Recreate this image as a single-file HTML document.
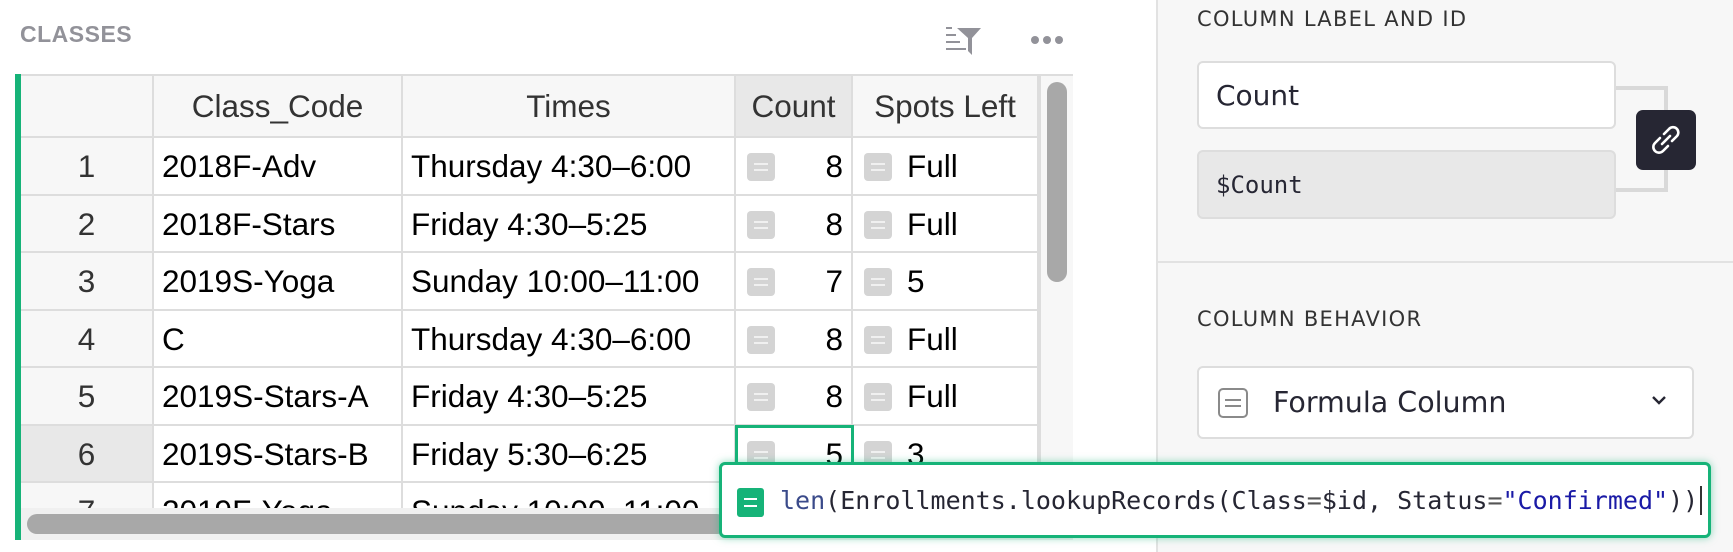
<!DOCTYPE html>
<html><head><meta charset="utf-8"><style>
*{box-sizing:border-box;margin:0;padding:0}
body{width:1733px;height:552px;overflow:hidden;background:#fff;font-family:"Liberation Sans",sans-serif;position:relative;color:#000}
.a{position:absolute}
.t{font-size:31.5px;line-height:57px;white-space:nowrap;overflow:hidden}
.mono{font-family:"DejaVu Sans Mono","Liberation Mono",monospace}
.eq{position:absolute;width:28px;height:28px;background:#d4d4d4;border-radius:4px}
.eq:before,.eq:after{content:"";position:absolute;left:7px;width:14px;height:2px;background:#f0f0f0}
.eq:before{top:10px}.eq:after{top:16px}
</style></head><body>
<div class="a" style="left:20px;top:21px;font-size:23px;font-weight:bold;color:#929299;letter-spacing:0.5px">CLASSES</div>
<svg class="a" style="left:944px;top:24px" width="38" height="32" viewBox="0 0 38 32">
<rect x="2" y="3" width="6" height="2" fill="#929299"/><rect x="2" y="10" width="10" height="2" fill="#929299"/><rect x="2" y="17" width="14" height="2" fill="#929299"/><rect x="2" y="24" width="20" height="2" fill="#929299"/>
<path d="M13 4 H37 L28 14 V31 L24 27 V14 Z" fill="#929299"/></svg>
<div class="a" style="left:1031px;top:36px;width:8px;height:8px;border-radius:4px;background:#929299"></div>
<div class="a" style="left:1043px;top:36px;width:8px;height:8px;border-radius:4px;background:#929299"></div>
<div class="a" style="left:1055px;top:36px;width:8px;height:8px;border-radius:4px;background:#929299"></div>

<div class="a" style="left:15px;top:74px;width:6px;height:466px;background:#16b378"></div>
<div id="tbl" class="a" style="left:21px;top:74px;width:1052px;height:466px;border-top:2px solid #ddd;overflow:hidden">
</div>
<script>
var cols=[0,133,382,715,832,1018];
var rows=[["1","2018F-Adv","Thursday 4:30–6:00","8","Full"],["2","2018F-Stars","Friday 4:30–5:25","8","Full"],["3","2019S-Yoga","Sunday 10:00–11:00","7","5"],["4","C","Thursday 4:30–6:00","8","Full"],["5","2019S-Stars-A","Friday 4:30–5:25","8","Full"],["6","2019S-Stars-B","Friday 5:30–6:25","5","3"],["7","2019F-Yoga","Sunday 10:00–11:00","8","Full"]];
var h='';
var hd=["","Class_Code","Times","Count","Spots Left"];
for(var c=0;c<5;c++){var bg=c==3?'#e8e8e8':'#f7f7f7';h+='<div class="a t" style="left:'+cols[c]+'px;top:0;width:'+(cols[c+1]-cols[c])+'px;height:62px;line-height:60px;background:'+bg+';border-right:2px solid #ddd;border-bottom:2px solid #ddd;text-align:center;color:#333">'+hd[c]+'</div>';}
for(var r=0;r<7;r++){var y=62+r*57.5;
h+='<div class="a t" style="left:0;top:'+y+'px;width:133px;height:57.5px;background:'+(r==5?'#e8e8e8':'#f7f7f7')+';border-right:2px solid #ddd;border-bottom:2px solid #ddd;text-align:center;color:#333">'+rows[r][0]+'</div>';
h+='<div class="a t" style="left:133px;top:'+y+'px;width:249px;height:57.5px;border-right:2px solid #ddd;border-bottom:2px solid #ddd;padding-left:8px">'+rows[r][1]+'</div>';
h+='<div class="a t" style="left:382px;top:'+y+'px;width:333px;height:57.5px;border-right:2px solid #ddd;border-bottom:2px solid #ddd;padding-left:8px">'+rows[r][2]+'</div>';
h+='<div class="a t" style="left:715px;top:'+y+'px;width:117px;height:57.5px;border-right:2px solid #ddd;border-bottom:2px solid #ddd;text-align:right;padding-right:8px">'+rows[r][3]+'<div class="eq" style="left:11px;top:15px"></div></div>';
h+='<div class="a t" style="left:832px;top:'+y+'px;width:186px;height:57.5px;border-right:2px solid #ddd;border-bottom:2px solid #ddd;padding-left:54px">'+rows[r][4]+'<div class="eq" style="left:11px;top:15px"></div></div>';}
h+='<div class="a" style="left:714px;top:'+(62+5*57.5-1)+'px;width:119px;height:59px;border:3px solid #16b378"></div>';
h+='<div class="a" style="left:1018px;top:0;width:34px;height:466px;background:#f7f7f7;border-left:2px solid #ddd"></div>';
h+='<div class="a" style="left:1026px;top:6px;width:20px;height:200px;border-radius:10px;background:#a8a8a8"></div>';
h+='<div class="a" style="left:0;top:432px;width:1052px;height:34px;background:#f0f0f0"></div>';
h+='<div class="a" style="left:6px;top:438px;width:700px;height:20px;border-radius:10px;background:#a8a8a8"></div>';
document.getElementById('tbl').innerHTML=h;
</script>

<div class="a" style="left:1156px;top:0;width:577px;height:552px;background:#f7f7f7;border-left:2px solid #e2e2e2"></div>
<div class="a" style="left:1197px;top:7px;font-size:21px;color:#333;font-family:'DejaVu Sans','Liberation Sans',sans-serif;letter-spacing:1.3px">COLUMN LABEL AND ID</div>
<div class="a" style="left:1616px;top:86px;width:52px;height:106px;border:4px solid #d9d9d9;border-left:none"></div>
<div class="a" style="left:1197px;top:61px;width:419px;height:68px;background:#fff;border:2px solid #ddd;border-radius:6px;font-family:'DejaVu Sans',sans-serif;font-size:28px;line-height:66px;padding-left:17px;color:#262633">Count</div>
<div class="a" style="left:1197px;top:150px;width:419px;height:69px;background:#e8e8e8;border:2px solid #ddd;border-radius:6px;font-size:24px;line-height:67px;padding-left:17px;color:#262633" ><span class="mono">$Count</span></div>
<div class="a" style="left:1636px;top:110px;width:60px;height:60px;background:#262633;border-radius:7px"></div>
<svg class="a" style="left:1650px;top:124px" width="32" height="32" viewBox="0 0 32 32" fill="none" stroke="#fff" stroke-width="2.6" stroke-linecap="round">
<path d="M14 10 L19 5 A4.6 4.6 0 0 1 27 12 L22 17"/><path d="M18 22 L13 27 A4.6 4.6 0 0 1 5 19 L10 14"/><path d="M12 20 L20 12"/></svg>
<div class="a" style="left:1158px;top:261px;width:575px;height:2px;background:#e2e2e2"></div>
<div class="a" style="left:1197px;top:307px;font-size:21px;color:#333;font-family:'DejaVu Sans','Liberation Sans',sans-serif;letter-spacing:1.3px">COLUMN BEHAVIOR</div>
<div class="a" style="left:1197px;top:366px;width:497px;height:73px;background:#fff;border:2px solid #ddd;border-radius:6px"></div>
<div class="a" style="left:1218px;top:388px;width:30px;height:30px;border:2px solid #8a8a8a;border-radius:5px"></div>
<div class="a" style="left:1225px;top:399px;width:16px;height:2px;background:#8a8a8a"></div>
<div class="a" style="left:1225px;top:405px;width:16px;height:2px;background:#8a8a8a"></div>
<div class="a" style="left:1273px;top:383px;font-family:'DejaVu Sans',sans-serif;font-size:28.5px;line-height:40px;color:#262633">Formula Column</div>
<svg class="a" style="left:1651px;top:394px" width="16" height="12" viewBox="0 0 16 12"><path d="M2 3 L8 9 L14 3" stroke="#262633" stroke-width="2.4" fill="none"/></svg>

<div class="a" style="left:719px;top:462px;width:992px;height:76px;background:#fff;border:3px solid #16b378;border-radius:6px;box-shadow:0 0 8px rgba(22,179,120,0.5)"></div>
<div class="a" style="left:737px;top:488px;width:27px;height:29px;background:#16b378;border-radius:3px"></div>
<div class="a" style="left:744px;top:498px;width:13px;height:2px;background:#fff"></div>
<div class="a" style="left:744px;top:505px;width:13px;height:2px;background:#fff"></div>
<div class="a mono" style="left:780px;top:484px;font-size:25px;line-height:34px;white-space:nowrap;color:#262633"><span style="color:#3a4a8a">len</span>(Enrollments.lookupRecords(Class<span style="color:#555">=</span>$id, Status<span style="color:#555">=</span><span style="color:#1a1aa6">"Confirmed"</span>))<span style="border-left:2px solid #333;margin-left:2px"></span></div>
</body></html>
